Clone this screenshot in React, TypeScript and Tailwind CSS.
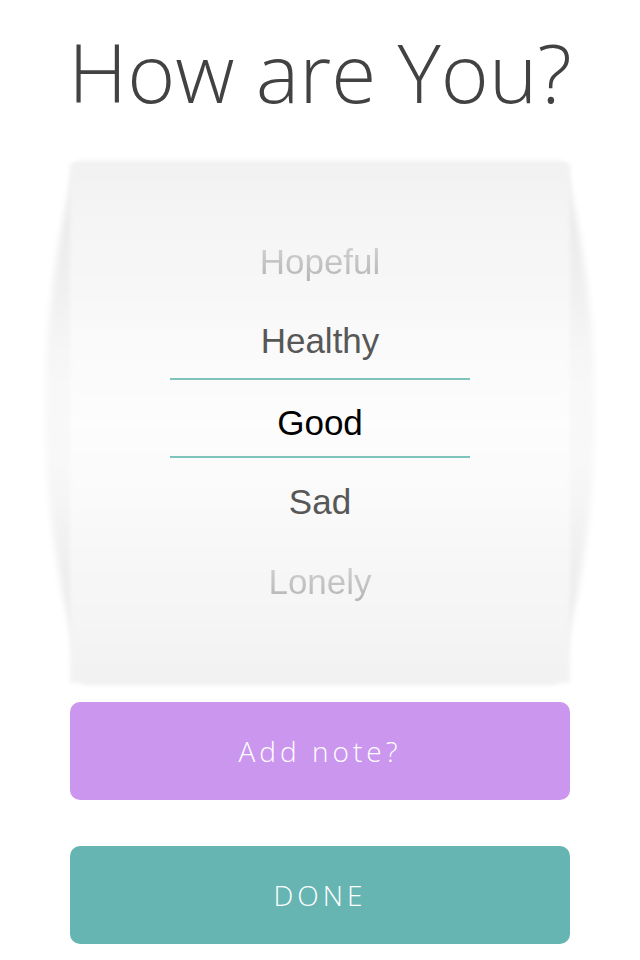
import React from "react";

const moods = [
  { label: "Hopeful", tone: "faded" },
  { label: "Healthy", tone: "near" },
  { label: "Good", tone: "selected" },
  { label: "Sad", tone: "near" },
  { label: "Lonely", tone: "faded" },
];

const DrumBackground: React.FC = () => (
  <svg
    className="absolute left-[-30px] top-[-15px] w-[560px] h-[550px] overflow-visible"
    viewBox="0 0 560 550"
  >
    <defs>
      <linearGradient id="barrelFill" x1="0" y1="0" x2="0" y2="1">
        <stop offset="0" stopColor="#e6e6e6" />
        <stop offset="0.42" stopColor="#f8f8f8" />
        <stop offset="0.58" stopColor="#f8f8f8" />
        <stop offset="1" stopColor="#e5e5e5" />
      </linearGradient>
      <linearGradient id="faceFill" x1="0" y1="0" x2="0" y2="1">
        <stop offset="0" stopColor="#f2f2f2" />
        <stop offset="0.5" stopColor="#fdfdfd" />
        <stop offset="1" stopColor="#f2f2f2" />
      </linearGradient>
      <filter id="softEdge" x="-20%" y="-20%" width="140%" height="140%">
        <feGaussianBlur stdDeviation="3" />
      </filter>
      <filter id="softFace" x="-10%" y="-10%" width="120%" height="120%">
        <feGaussianBlur stdDeviation="2" />
      </filter>
    </defs>
    <path
      d="M36 15 L524 15 Q590 275 516 535 L44 535 Q-30 275 36 15 Z"
      fill="url(#barrelFill)"
      filter="url(#softEdge)"
    />
    <rect x="30" y="15" width="500" height="520" fill="url(#faceFill)" filter="url(#softFace)" />
  </svg>
);

const MoodRow: React.FC<{ label: string; tone: string; after?: boolean }> = ({ label, tone, after }) => {
  if (tone === "selected") {
    return (
      <div className="w-[300px] h-[80px] mx-auto border-y-2 border-[#7dc4bc] pt-[10px] text-center leading-[66px] text-black">
        {label}
      </div>
    );
  }
  if (tone === "near") {
    // rows under the selection sit a little lower
    return after ? (
      <div className="h-[84px] pt-[4px] text-center leading-[80px] text-[#575757]">{label}</div>
    ) : (
      <div className="h-[76px] pt-[2px] text-center leading-[74px] text-[#575757]">{label}</div>
    );
  }
  return (
    <div className="h-[80px] flex justify-center items-center">
      <span className="bg-gradient-to-b from-[#d4d4d4] to-[#b4b4b4] bg-clip-text text-transparent leading-[40px]">
        {label}
      </span>
    </div>
  );
};

export default function App() {
  return (
    <div className="w-[640px] h-[960px] bg-white overflow-hidden">
      <h1
        className="pt-[30px] text-center text-[82px] leading-none font-light text-[#424242]"
        style={{ fontFamily: '"Open Sans", sans-serif' }}
      >
        How are You?
      </h1>

      {/* picker drum */}
      <div className="relative w-[500px] h-[520px] mx-auto mt-[51px]">
        <DrumBackground />
        <div
          className="relative pt-[59px] text-[35px]"
          style={{ fontFamily: '"Liberation Sans", Arial, sans-serif' }}
        >
          {moods.map((m, i) => (
            <MoodRow key={m.label} label={m.label} tone={m.tone} after={i > 2} />
          ))}
        </div>
      </div>

      <div
        className="flex flex-col items-center gap-[46px] mt-[19px] font-light text-white text-[28px] tracking-[4px]"
        style={{ fontFamily: '"Open Sans", sans-serif' }}
      >
        <button className="w-[500px] h-[98px] rounded-[10px] bg-[#ca96ee]">Add note?</button>
        <button className="w-[500px] h-[98px] rounded-[10px] bg-[#66b5b2]">DONE</button>
      </div>
    </div>
  );
}
